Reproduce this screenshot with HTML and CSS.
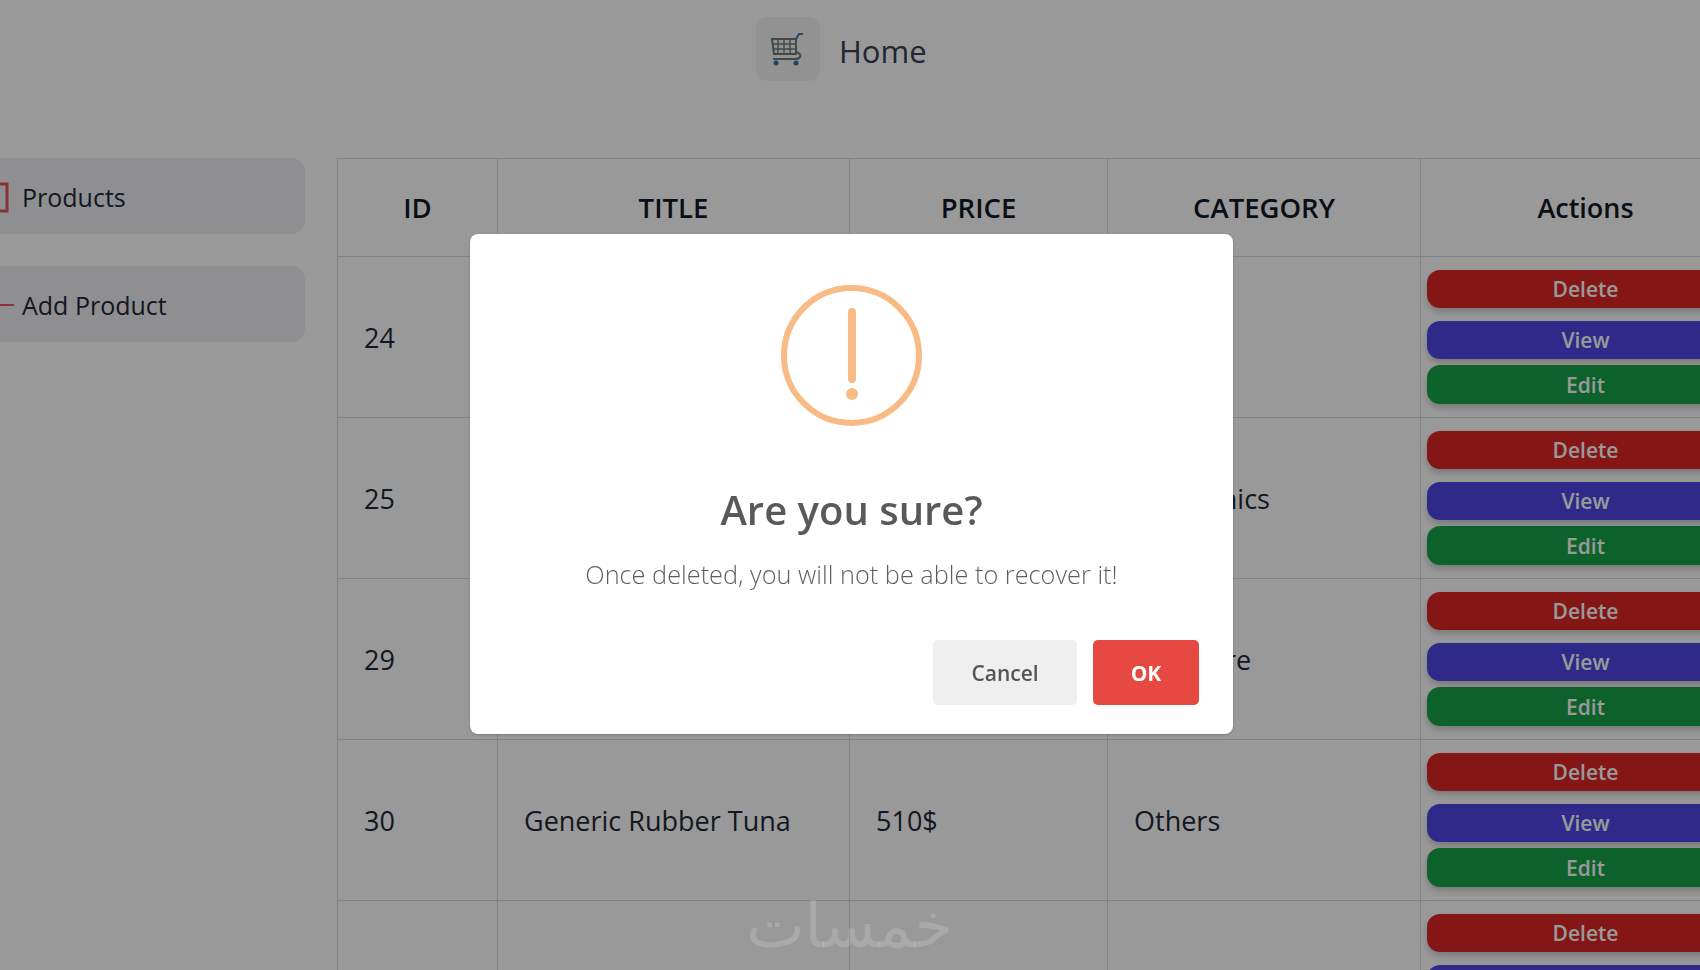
FILE: index.html
```html
<!DOCTYPE html>
<html lang="en">
<head>
    <meta charset="UTF-8">
    <title>Home</title>
    <link rel="stylesheet" href="styles.css">
</head>
<body>

    <header class="topbar">
        <div class="logo-tile">
            <svg class="cart-icon" viewBox="0 0 36 34" fill="none">
                <path d="M2 7h24v15H4z" stroke="#70797a" stroke-width="2"/>
                <path d="M8 7v15M14 7v15M20 7v15M3 12h23M3 17h23" stroke="#70797a" stroke-width="1.4"/>
                <path d="M26 7l3-5h4" stroke="#3f78a8" stroke-width="2"/>
                <path d="M26 20c4 1 5 3 4 5-1 2-3 2-5 2H3" stroke="#70797a" stroke-width="2"/>
                <circle cx="6" cy="31" r="2.5" fill="#2a73b0"/>
                <circle cx="26" cy="31" r="2.5" fill="#2a73b0"/>
            </svg>
        </div>
        <a class="home-link">Home</a>
    </header>

    <div class="main">
        <aside class="sidebar">
            <div class="side-item">
                <svg class="side-icon" viewBox="0 0 30 30" fill="none"><rect x="2" y="2" width="27" height="27" stroke="#e2545c" stroke-width="3"/></svg>
                <span>Products</span>
            </div>
            <div class="side-item">
                <svg class="side-icon" viewBox="0 0 30 30" fill="none"><path d="M15 2v26M2 15h34" stroke="#e2545c" stroke-width="2"/></svg>
                <span>Add Product</span>
            </div>
        </aside>

        <table class="products">
            <colgroup>
                <col class="col-id">
                <col class="col-title">
                <col class="col-price">
                <col class="col-category">
                <col class="col-actions">
            </colgroup>
            <thead>
                <tr>
                    <th>ID</th>
                    <th>TITLE</th>
                    <th>PRICE</th>
                    <th>CATEGORY</th>
                    <th class="th-actions">Actions</th>
                </tr>
            </thead>
            <tbody>
                <tr>
                    <td>24</td>
                    <td></td>
                    <td></td>
                    <td></td>
                    <td class="actions">
                        <button class="btn btn-delete">Delete</button>
                        <button class="btn btn-view">View</button>
                        <button class="btn btn-edit">Edit</button>
                    </td>
                </tr>
                <tr>
                    <td>25</td>
                    <td></td>
                    <td></td>
                    <td>Electronics</td>
                    <td class="actions">
                        <button class="btn btn-delete">Delete</button>
                        <button class="btn btn-view">View</button>
                        <button class="btn btn-edit">Edit</button>
                    </td>
                </tr>
                <tr>
                    <td>29</td>
                    <td></td>
                    <td></td>
                    <td>Furniture</td>
                    <td class="actions">
                        <button class="btn btn-delete">Delete</button>
                        <button class="btn btn-view">View</button>
                        <button class="btn btn-edit">Edit</button>
                    </td>
                </tr>
                <tr>
                    <td>30</td>
                    <td>Generic Rubber Tuna</td>
                    <td>510$</td>
                    <td>Others</td>
                    <td class="actions">
                        <button class="btn btn-delete">Delete</button>
                        <button class="btn btn-view">View</button>
                        <button class="btn btn-edit">Edit</button>
                    </td>
                </tr>
                <tr>
                    <td></td>
                    <td></td>
                    <td>510$</td>
                    <td></td>
                    <td class="actions">
                        <button class="btn btn-delete">Delete</button>
                        <button class="btn btn-view">View</button>
                        <button class="btn btn-edit">Edit</button>
                    </td>
                </tr>
            </tbody>
        </table>
    </div>

    <div class="overlay">
        <div class="modal">
            <div class="warn-icon">
                <span class="warn-line"></span>
                <span class="warn-dot"></span>
            </div>
            <h2 class="modal-title">Are you sure?</h2>
            <p class="modal-text">Once deleted, you will not be able to recover it!</p>
            <div class="modal-footer">
                <button class="modal-btn modal-cancel">Cancel</button>
                <button class="modal-btn modal-ok">OK</button>
            </div>
        </div>
    </div>

    <div class="watermark" lang="ar" dir="rtl">خمسات</div>

</body>
</html>
```

FILE: styles.css
```css
* {
    box-sizing: border-box;
}

html, body {
    height: 970px;
}

body {
    margin: 0;
    overflow: hidden;
    background: #fff;
    color: #1f2937;
    font-family: "Open Sans", "Noto Sans", sans-serif;
}

.topbar {
    height: 158px;
    padding: 17px 0 0 756px;
    display: flex;
    align-items: flex-start;
    gap: 19px;
}

.logo-tile {
    width: 64px;
    height: 64px;
    border-radius: 11px;
    background: #f3f4f6;
    display: flex;
    justify-content: center;
    align-items: center;
}

.cart-icon {
    width: 36px;
    height: 34px;
}

.home-link {
    height: 64px;
    padding-top: 2px;
    line-height: 64px;
    font-size: 31px;
    font-weight: 500;
    color: #374151;
}

.main {
    display: flex;
    align-items: flex-start;
    margin-left: -40px;
}

.sidebar {
    width: 345px;
    flex-shrink: 0;
    display: flex;
    flex-direction: column;
    gap: 32px;
}

.side-item {
    height: 76px;
    padding-left: 18px;
    padding-top: 2px;
    display: flex;
    align-items: center;
    gap: 14px;
    border-radius: 14px;
    background: #eeeef2;
    font-size: 25px;
    font-weight: 500;
}

.side-icon {
    width: 30px;
    height: 30px;
    overflow: visible;
}

.sidebar + .products {
    margin-left: 32px;
}

.products {
    table-layout: fixed;
    width: 1413px;
    flex-shrink: 0;
    border-collapse: collapse;
}

.col-id { width: 160px; }
.col-title { width: 352px; }
.col-price { width: 258px; }
.col-category { width: 313px; }
.col-actions { width: 330px; }

.products th, .products td {
    border: 1px solid #dadbdd;
}

.products th {
    height: 98px;
    font-size: 27.5px;
    font-weight: 600;
    color: #111827;
}

.products .th-actions {
    font-weight: 600;
    font-size: 27px;
}

.products td {
    height: 161px;
    padding: 0 26px;
    font-size: 27px;
}

.products .actions {
    padding: 13px 6px 13px;
}

.btn {
    display: block;
    width: 100%;
    height: 38px;
    padding: 0;
    border: none;
    border-radius: 13px;
    color: #fff;
    font-family: inherit;
    font-size: 21px;
    font-weight: 600;
    box-shadow: 0 4px 6px rgba(0, 0, 0, 0.2);
}

.btn-delete {
    margin-bottom: 13px;
    background: #dc2626;
}

.btn-view {
    margin-bottom: 6px;
    background: #4f46e5;
}

.btn-edit {
    height: 39px;
    background: #16a34a;
}

.overlay {
    position: fixed;
    top: 0;
    left: 0;
    width: 100%;
    height: 100%;
    padding-left: 3px;
    padding-bottom: 2px;
    background: rgba(0, 0, 0, 0.4);
    display: flex;
    justify-content: center;
    align-items: center;
}

.modal {
    width: 763px;
    height: 500px;
    padding: 51px 33px 0;
    background: #fff;
    border-radius: 8px;
    display: flex;
    flex-direction: column;
    align-items: center;
    box-shadow: 0 1px 3px rgba(0, 0, 0, 0.2);
}

.warn-icon {
    width: 141px;
    height: 141px;
    padding-top: 17px;
    border: 6px solid #f8bb86;
    border-radius: 50%;
    display: flex;
    flex-direction: column;
    align-items: center;
    flex-shrink: 0;
}

.warn-line {
    width: 8px;
    height: 75px;
    border-radius: 4px;
    background: #f8bb86;
}

.warn-dot {
    width: 12px;
    height: 12px;
    margin-top: 5px;
    border-radius: 50%;
    background: #f8bb86;
}

.modal-title {
    margin: 59px 0 0;
    font-size: 40px;
    line-height: 50px;
    font-weight: 600;
    color: rgba(0, 0, 0, 0.65);
}

.modal-text {
    margin: 22px 0 0;
    font-size: 25.3px;
    line-height: 34px;
    font-weight: 300;
    color: rgba(0, 0, 0, 0.64);
}

.modal-footer {
    align-self: flex-end;
    margin-top: 49px;
    margin-right: 1px;
    display: flex;
    gap: 16px;
}

.modal-btn {
    height: 65px;
    border: none;
    border-radius: 5px;
    font-family: inherit;
    font-size: 21px;
    font-weight: 600;
}

.modal-cancel {
    width: 144px;
    background: #efefef;
    color: #555;
}

.modal-ok {
    width: 106px;
    background: #e64942;
    color: #fff;
    font-weight: 700;
}

.watermark {
    position: absolute;
    left: 747px;
    top: 890px;
    width: 206px;
    text-align: center;
    font-family: "DejaVu Sans", sans-serif;
    font-size: 62px;
    line-height: 72px;
    color: rgba(255, 255, 255, 0.16);
}
```
